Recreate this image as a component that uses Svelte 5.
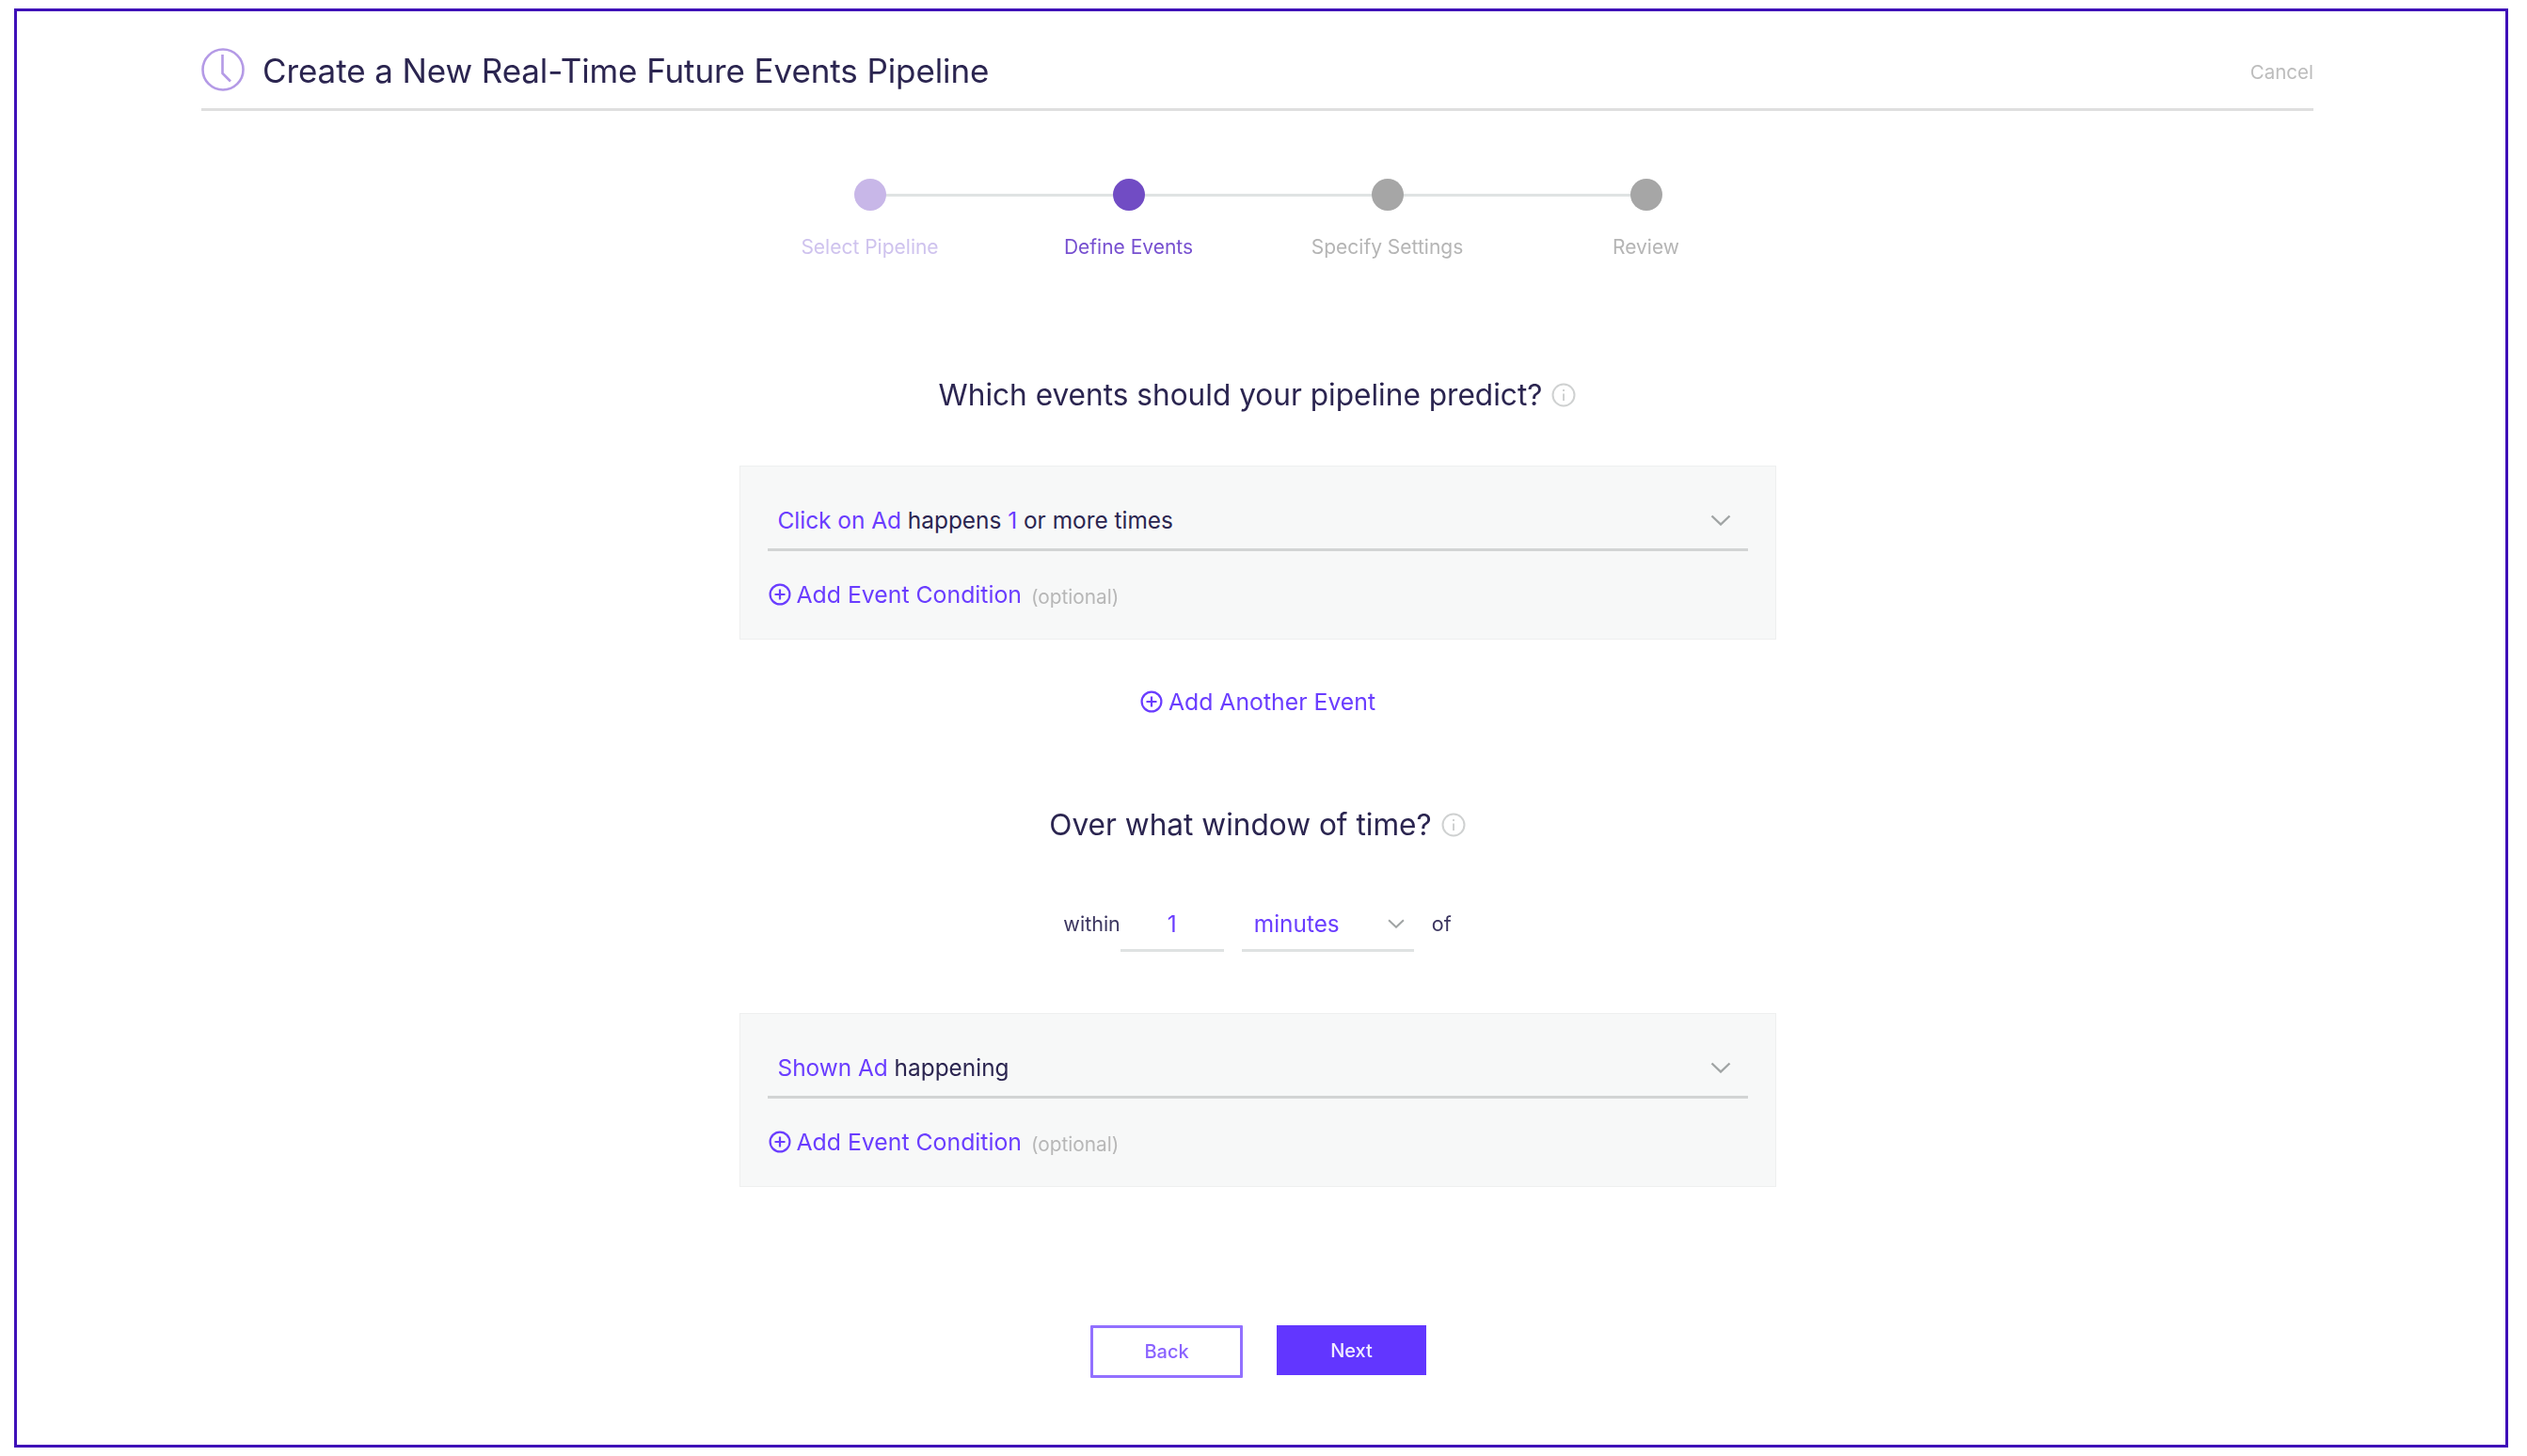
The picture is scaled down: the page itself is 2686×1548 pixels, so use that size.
<script lang="ts">
	const steps = [
		{ label: 'Select Pipeline', state: 'done' },
		{ label: 'Define Events', state: 'active' },
		{ label: 'Specify Settings', state: 'todo' },
		{ label: 'Review', state: 'todo' }
	];
</script>

{#snippet chevron()}
	<svg class="chevron" viewBox="0 0 22 12" fill="none">
		<path d="M1.5 1.5 11 10.5l9.5-9" stroke="#a0a4a4" stroke-width="2.4" />
	</svg>
{/snippet}

{#snippet plus()}
	<svg class="plus" viewBox="0 0 24 24" fill="none">
		<circle cx="12" cy="12" r="10.4" stroke="currentColor" stroke-width="2.2" />
		<path d="M12 6.5v11M6.5 12h11" stroke="currentColor" stroke-width="2.2" />
	</svg>
{/snippet}

{#snippet info()}
	<svg class="info" viewBox="0 0 26 26" fill="none">
		<circle cx="13" cy="13" r="11.5" stroke="#cfd1d1" stroke-width="2" />
		<path d="M13 11.5v7.5M13 7v2" stroke="#cfd1d1" stroke-width="2" />
	</svg>
{/snippet}

{#snippet condition()}
	<div class="condition">
		<button type="button" class="link">{@render plus()}Add Event Condition</button>
		<span class="optional">(optional)</span>
	</div>
{/snippet}

<div class="frame">
	<main class="page">
		<header class="header">
			<svg class="clock" viewBox="0 0 46 46" fill="none">
				<circle cx="23" cy="23" r="21.5" stroke="#b49ae6" stroke-width="2.6" />
				<path d="M22.5 7v20l8.5 8.5" stroke="#b49ae6" stroke-width="2.6" />
			</svg>
			<h1>Create a New Real-Time Future Events Pipeline</h1>
			<span class="cancel">Cancel</span>
		</header>

		<ol class="stepper">
			{#each steps as step}
				<li class="step {step.state}">
					<span class="dot"></span>
					<span class="step-label">{step.label}</span>
				</li>
			{/each}
		</ol>

		<h2 class="first-q">Which events should your pipeline predict? {@render info()}</h2>

		<section class="card first-card">
			<div class="select-row">
				<span><em>Click on Ad</em> happens <em>1</em> or more times</span>
				{@render chevron()}
			</div>
			{@render condition()}
		</section>

		<button type="button" class="link another">{@render plus()}Add Another Event</button>

		<h2 class="second-q">Over what window of time? {@render info()}</h2>

		<div class="window">
			<span class="within">within</span>
			<span class="field number">1</span>
			<span class="field unit">minutes{@render chevron()}</span>
			<span>of</span>
		</div>

		<section class="card second-card">
			<div class="select-row">
				<span><em>Shown Ad</em> happening</span>
				{@render chevron()}
			</div>
			{@render condition()}
		</section>

		<div class="actions">
			<button type="button" class="back">Back</button>
			<button type="button" class="next">Next</button>
		</div>
	</main>
</div>

<style>
	:global(body) {
		background: #fff;
		font-family: Inter, 'Noto Sans', sans-serif;
		color: #2b2550;
	}

	.frame {
		box-sizing: border-box;
		width: 2651px;
		height: 1530px;
		margin: 9px 0 0 15px;
		border: 3px solid #3f10b8;
	}

	.page {
		width: 2245px;
		margin-left: 196px;
		display: flex;
		flex-direction: column;
		align-items: center;
		filter: blur(0.6px);
	}

	.header {
		box-sizing: border-box;
		align-self: stretch;
		height: 106px;
		padding-top: 39px;
		border-bottom: 3px solid #dfdfdf;
		display: flex;
		align-items: flex-start;
	}

	.clock {
		width: 46px;
		height: 46px;
		flex: none;
	}

	h1 {
		margin: 1px 0 0 19px;
		font-size: 35px;
		line-height: 46px;
		font-weight: 400;
		letter-spacing: -0.1px;
		color: #2b2550;
	}

	.cancel {
		margin-left: auto;
		margin-top: 11px;
		font-size: 20.5px;
		line-height: 30px;
		color: #bcbcbc;
	}

	.stepper {
		display: grid;
		grid-template-columns: repeat(4, 275px);
		margin: 72px 0 0 1px;
		padding: 0;
		list-style: none;
	}

	.step {
		position: relative;
		display: flex;
		flex-direction: column;
		align-items: center;
	}

	.step:not(:last-child)::after {
		content: '';
		position: absolute;
		top: 16px;
		left: 50%;
		width: 100%;
		height: 3px;
		background: #dfe3e3;
	}

	.dot {
		position: relative;
		z-index: 1;
		width: 34px;
		height: 34px;
		border-radius: 50%;
		background: #a6a6a6;
	}

	.step-label {
		margin-top: 24px;
		font-size: 21px;
		line-height: 30px;
		color: #b5b5b5;
	}

	.done .dot {
		background: #c8b7e8;
	}

	.done .step-label {
		color: #cfc3ee;
	}

	.active .dot {
		background: #714cc4;
	}

	.active .step-label {
		color: #7750d0;
	}

	h2 {
		margin: 0;
		font-size: 31.6px;
		line-height: 44px;
		font-weight: 400;
		color: #2b2550;
		display: flex;
		align-items: center;
		gap: 10px;
	}

	.first-q {
		margin-top: 120px;
	}

	.second-q {
		margin-top: 94px;
	}

	.info {
		width: 26px;
		height: 26px;
	}

	.card {
		box-sizing: border-box;
		width: 1102px;
		height: 185px;
		padding: 30px 29px 0;
		background: #f7f8f8;
		border: 1px solid #eeefef;
	}

	.first-card {
		margin-top: 53px;
	}

	.second-card {
		margin-top: 65px;
	}

	.select-row {
		box-sizing: border-box;
		height: 60px;
		padding: 0 6px 3px 11px;
		border-bottom: 3px solid #d2d4d4;
		display: flex;
		align-items: center;
		justify-content: space-between;
		font-size: 24.4px;
		color: #2b2550;
	}

	em {
		font-style: normal;
		color: #6a3dff;
	}

	.chevron {
		width: 22px;
		height: 12px;
		margin-right: 12px;
		flex: none;
	}

	.condition {
		margin-top: 31px;
		height: 30px;
		padding-left: 1px;
		display: flex;
		align-items: center;
	}

	.link {
		padding: 0;
		border: 0;
		background: none;
		color: #6a3dff;
		font: inherit;
		font-size: 24.8px;
		line-height: 30px;
		display: flex;
		align-items: center;
		gap: 6px;
	}

	.plus {
		width: 24px;
		height: 24px;
		flex: none;
	}

	.optional {
		margin: 5px 0 0 10px;
		font-size: 20.8px;
		color: #b7b7b7;
	}

	.another {
		margin: 51px 0 0 1px;
	}

	.window {
		height: 49px;
		margin-top: 64px;
		display: flex;
		align-items: flex-start;
		font-size: 21.5px;
		line-height: 38px;
		color: #3c3660;
	}

	.field {
		box-sizing: border-box;
		height: 49px;
		border-bottom: 3px solid #dfe2e2;
		color: #6a3dff;
		font-size: 24.4px;
	}

	.number {
		width: 110px;
		text-align: center;
	}

	.unit {
		width: 183px;
		margin: 0 19px;
		padding-left: 13px;
		display: flex;
		align-items: flex-start;
		justify-content: space-between;
	}

	.unit .chevron {
		width: 20px;
		height: 10px;
		margin: 14px 9px 0 0;
	}

	.actions {
		margin: 147px 0 0 2px;
		display: flex;
		align-items: flex-start;
		gap: 36px;
	}

	.actions button {
		box-sizing: border-box;
		font: inherit;
		font-size: 20px;
		font-weight: 500;
	}

	.back {
		width: 162px;
		height: 56px;
		background: #fff;
		border: 3px solid #9270ff;
		color: #8a63ff;
		border-radius: 1px;
	}

	.next {
		width: 159px;
		height: 53px;
		background: #6236ff;
		border: 0;
		color: #f1edff;
	}
</style>
